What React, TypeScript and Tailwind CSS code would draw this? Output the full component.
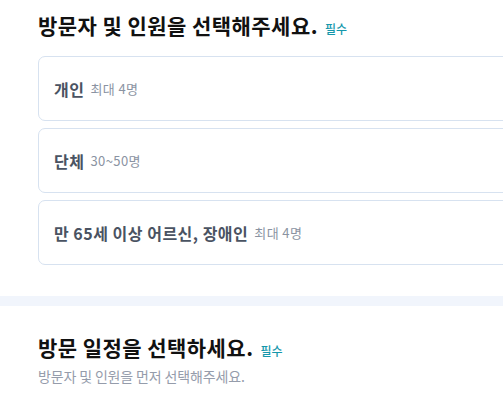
const font = { fontFamily: '"Noto Sans CJK KR", "Noto Sans", sans-serif' };

const options = [
	{ title: '개인', sub: '최대 4명' },
	{ title: '단체', sub: '30~50명' },
	{ title: '만 65세 이상 어르신, 장애인', sub: '최대 4명' },
];

const SectionTitle = ({ text }: { text: string }) => (
	<h2 className="flex items-baseline h-[28px] leading-[28px]">
		<span className="text-[21px] font-bold tracking-[0.45px] text-[#111111]">{text}</span>
		<span className="ml-[7px] text-[12px] font-medium text-[#1597ab]">필수</span>
	</h2>
);

export default function App() {
	return (
		<div className="w-[503px] h-[405px] overflow-hidden bg-white" style={font}>
			<section className="pl-[38px] pt-[11px] pb-[31px]">
				<SectionTitle text="방문자 및 인원을 선택해주세요." />
				<ul className="mt-[17px] flex flex-col gap-[7px] w-[490px]">
					{options.map((o) => (
						<li
							key={o.title}
							className="h-[65px] flex items-center px-[15px] border border-[#d7e2f0] rounded-[7px] bg-white"
						>
							<span className="text-[16px] font-bold tracking-[0.5px] text-[#4a5362]">{o.title}</span>
							<span className="ml-[6px] text-[13px] tracking-[0.4px] text-[#8a93a2]">{o.sub}</span>
						</li>
					))}
				</ul>
			</section>
			<div className="h-[10px] bg-[#f1f5fc]" />
			<section className="pl-[38px] pt-[27px]">
				<SectionTitle text="방문 일정을 선택하세요." />
				<p className="mt-[5px] text-[14px] tracking-[-0.15px] leading-[20px] text-[#959cab]">
					방문자 및 인원을 먼저 선택해주세요.
				</p>
			</section>
		</div>
	);
}
